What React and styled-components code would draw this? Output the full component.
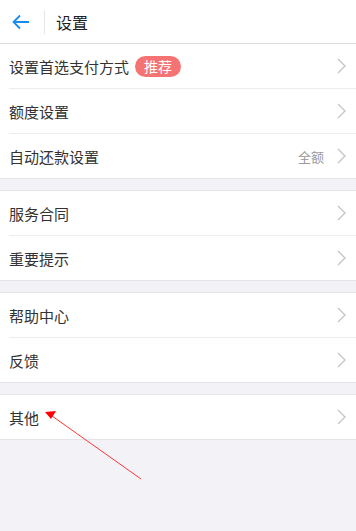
import React from "react";
import styled, { createGlobalStyle } from "styled-components";

const GlobalStyle = createGlobalStyle`
  html, body {
    margin: 0;
    padding: 0;
    background: #f3f3f7;
  }
  body {
    font-family: "Noto Sans CJK SC", "Liberation Sans", sans-serif;
  }
`;

const Page = styled.div`
  position: relative;
  width: 356px;
  min-height: 531px;
  background: #f3f3f7;
`;

const Header = styled.div`
  height: 43px;
  display: flex;
  align-items: center;
  background: #fff;
  border-bottom: 1px solid #dcdce0;
`;

const BackButton = styled.div`
  width: 38px;
  height: 43px;
  display: flex;
  align-items: center;
  justify-content: center;
  padding-left: 2px;
`;

const Divider = styled.div`
  width: 1px;
  height: 24px;
  background: #e6e6e6;
  margin-left: 4px;
  margin-right: 11px;
`;

const Title = styled.div`
  font-size: 16px;
  color: #222;
`;

const Group = styled.div`
  background: #fff;
  border-bottom: 1px solid #e4e4e8;
  margin-top: ${(p) => (p.first ? "0" : "11px")};
  border-top: ${(p) => (p.first ? "none" : "1px solid #e4e4e8")};
`;

const Row = styled.div`
  height: 44px;
  display: flex;
  align-items: center;
  margin-left: 9px;
  padding-right: 10px;
  border-bottom: ${(p) => (p.last ? "none" : "1px solid #ececee")};
`;

const Label = styled.div`
  flex: 1;
  display: flex;
  align-items: center;
  font-size: 15px;
  color: #333;
`;

const Badge = styled.span`
  margin-left: 6px;
  padding: 0 9px;
  height: 21px;
  line-height: 21px;
  border-radius: 11px;
  background: #f57373;
  color: #fff;
  font-size: 14px;
`;

const Value = styled.span`
  font-size: 13px;
  color: #999;
  margin-right: 13px;
`;

const Overlay = styled.svg`
  position: absolute;
  left: 0;
  top: 0;
  pointer-events: none;
`;

const Chevron = () => (
  <svg width="9" height="16" viewBox="0 0 9 16">
    <path d="M1 1l7 7-7 7" fill="none" stroke="#c4c4c8" strokeWidth="1.3" />
  </svg>
);

const Item = ({ label, badge, value, last }) => (
  <Row last={last}>
    <Label>
      {label}
      {badge && <Badge>{badge}</Badge>}
    </Label>
    {value && <Value>{value}</Value>}
    <Chevron />
  </Row>
);

const groups = [
  [
    { label: "设置首选支付方式", badge: "推荐" },
    { label: "额度设置" },
    { label: "自动还款设置", value: "全额" },
  ],
  [{ label: "服务合同" }, { label: "重要提示" }],
  [{ label: "帮助中心" }, { label: "反馈" }],
  [{ label: "其他" }],
];

export default function App() {
  return (
    <Page>
      <GlobalStyle />
      <Header>
        <BackButton>
          <svg width="18" height="16" viewBox="0 0 18 16">
            <path
              d="M17 8H2M8 1.5L1.5 8 8 14.5"
              fill="none"
              stroke="#1a8cf0"
              strokeWidth="1.8"
            />
          </svg>
        </BackButton>
        <Divider />
        <Title>设置</Title>
      </Header>
      {groups.map((g, i) => (
        <Group key={i} first={i === 0}>
          {g.map((it, j) => (
            <Item key={it.label} {...it} last={j === g.length - 1} />
          ))}
        </Group>
      ))}
      <Overlay width="356" height="531">
        <line x1="141" y1="479" x2="52" y2="416" stroke="#f33" strokeWidth="1" />
        <path d="M45 412l11 -1 -5 8z" fill="#f00" />
      </Overlay>
    </Page>
  );
}
